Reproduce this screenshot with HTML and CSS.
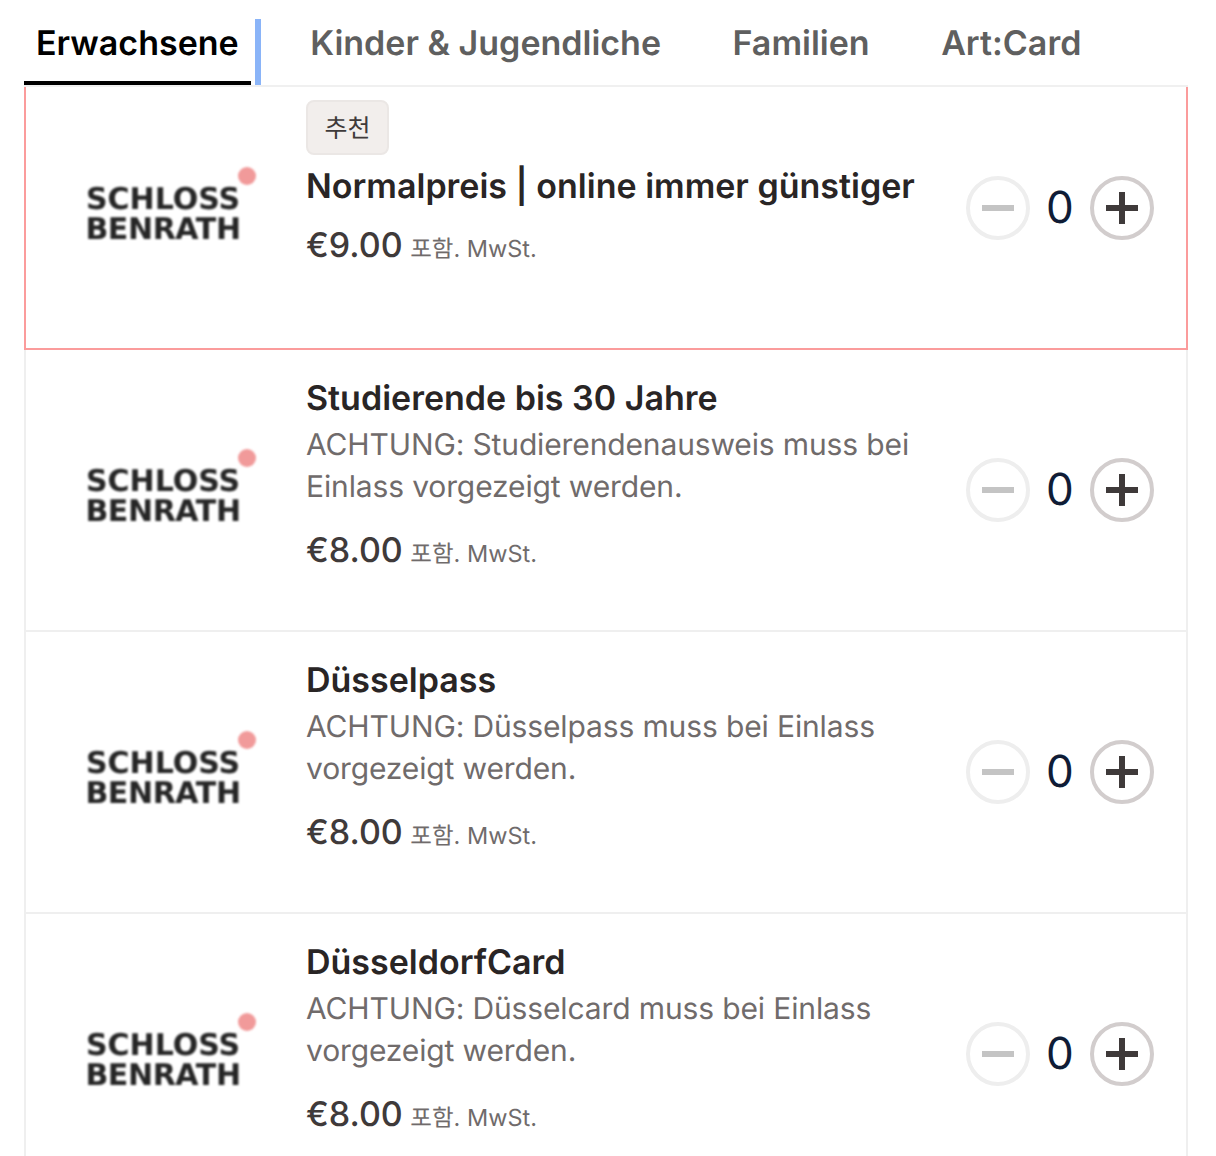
FILE: index.html
```html
<!DOCTYPE html>
<html lang="de">
<head>
<meta charset="utf-8">
<title>Tickets</title>
<link rel="stylesheet" href="styles.css">
</head>
<body>
<main class="page">
  <nav class="tabs">
    <a class="tab tab-active">Erwachsene<span class="focus-bar"></span></a>
    <a class="tab">Kinder &amp; Jugendliche</a>
    <a class="tab">Familien</a>
    <a class="tab">Art:Card</a>
  </nav>
  <section class="list">
    <article class="row row-featured">
      <div class="logo-col"><div class="logo"><span class="logo-dot"></span><span>SCHLOSS</span><span class="logo-second">BENRATH</span></div></div>
      <div class="info info-top">
        <span class="badge">추천</span>
        <h3 class="title">Normalpreis | online immer günstiger</h3>
        <p class="price price-tight"><span class="amount">€9.00</span> <span class="tax">포함. MwSt.</span></p>
      </div>
      <div class="stepper">
        <button class="step step-off"><svg viewBox="0 0 32 32" width="32" height="32"><path d="M0 13h32v6H0z"/></svg></button>
        <span class="count">0</span>
        <button class="step step-on"><svg viewBox="0 0 32 32" width="32" height="32"><path d="M13 0h6v13h13v6H19v13h-6V19H0v-6h13z"/></svg></button>
      </div>
    </article>
    <article class="row">
      <div class="logo-col"><div class="logo"><span class="logo-dot"></span><span>SCHLOSS</span><span class="logo-second">BENRATH</span></div></div>
      <div class="info">
        <h3 class="title">Studierende bis 30 Jahre</h3>
        <p class="desc">ACHTUNG: Studierendenausweis muss bei Einlass vorgezeigt werden.</p>
        <p class="price"><span class="amount">€8.00</span> <span class="tax">포함. MwSt.</span></p>
      </div>
      <div class="stepper">
        <button class="step step-off"><svg viewBox="0 0 32 32" width="32" height="32"><path d="M0 13h32v6H0z"/></svg></button>
        <span class="count">0</span>
        <button class="step step-on"><svg viewBox="0 0 32 32" width="32" height="32"><path d="M13 0h6v13h13v6H19v13h-6V19H0v-6h13z"/></svg></button>
      </div>
    </article>
    <article class="row">
      <div class="logo-col"><div class="logo"><span class="logo-dot"></span><span>SCHLOSS</span><span class="logo-second">BENRATH</span></div></div>
      <div class="info">
        <h3 class="title">Düsselpass</h3>
        <p class="desc">ACHTUNG: Düsselpass muss bei Einlass vorgezeigt werden.</p>
        <p class="price"><span class="amount">€8.00</span> <span class="tax">포함. MwSt.</span></p>
      </div>
      <div class="stepper">
        <button class="step step-off"><svg viewBox="0 0 32 32" width="32" height="32"><path d="M0 13h32v6H0z"/></svg></button>
        <span class="count">0</span>
        <button class="step step-on"><svg viewBox="0 0 32 32" width="32" height="32"><path d="M13 0h6v13h13v6H19v13h-6V19H0v-6h13z"/></svg></button>
      </div>
    </article>
    <article class="row">
      <div class="logo-col"><div class="logo"><span class="logo-dot"></span><span>SCHLOSS</span><span class="logo-second">BENRATH</span></div></div>
      <div class="info">
        <h3 class="title">DüsseldorfCard</h3>
        <p class="desc">ACHTUNG: Düsselcard muss bei Einlass vorgezeigt werden.</p>
        <p class="price"><span class="amount">€8.00</span> <span class="tax">포함. MwSt.</span></p>
      </div>
      <div class="stepper">
        <button class="step step-off"><svg viewBox="0 0 32 32" width="32" height="32"><path d="M0 13h32v6H0z"/></svg></button>
        <span class="count">0</span>
        <button class="step step-on"><svg viewBox="0 0 32 32" width="32" height="32"><path d="M13 0h6v13h13v6H19v13h-6V19H0v-6h13z"/></svg></button>
      </div>
    </article>
  </section>
</main>
</body>
</html>
```
FILE: styles.css
```css
* { box-sizing: border-box; }
html, body { margin: 0; height: 1156px; overflow: hidden; background: #fff; }
body { font-family: Inter, "Noto Sans CJK KR", sans-serif; text-rendering: geometricPrecision; }
.page { padding: 19px 28px 0 24px; }
.tabs { display: flex; gap: 47.5px; height: 68px; border-bottom: 2px solid #f0f0f0; }
.tab { position: relative; height: 66px; padding: 0 12px; font-size: 34px; line-height: 50px; font-weight: 600; color: #5f5f5f; white-space: nowrap; }
.tab-active { color: #000; border-bottom: 4px solid #000; }
.focus-bar { position: absolute; top: 0; right: -10px; width: 6px; height: 66px; background: #8ab4f8; }
.list { display: flex; flex-direction: column; }
.row { display: flex; align-items: center; height: 282px; padding-right: 32px; border: 2px solid #efefef; border-top: 0; }
.row-featured { height: 263px; padding-top: 13px; padding-bottom: 32px; border: 2px solid #fb9c9c; border-top: 0; }
.logo-col { flex: none; width: 280px; display: flex; justify-content: center; padding-right: 6px; }
.logo { position: relative; display: flex; flex-direction: column; align-items: center; margin-top: 14px; font-family: "DejaVu Sans", sans-serif; font-size: 30px; line-height: 30px; font-weight: 700; color: #262626; filter: blur(0.8px); }
.logo-second { letter-spacing: -0.4px; }
.logo-dot { position: absolute; top: -18px; right: -15px; width: 18px; height: 18px; border-radius: 50%; background: #f19a9a; }
.info { flex: 1; min-width: 0; display: flex; flex-direction: column; align-items: flex-start; padding-right: 40px; padding-bottom: 24px; }
.info-top { align-self: flex-start; padding-bottom: 0; }
.badge { height: 55px; padding: 0 16.5px 2px; display: flex; align-items: center; font-size: 25px; color: #3f3a3a; background: #f2eeec; border: 2px solid #ebe7e5; border-radius: 8px; margin-bottom: 9px; }
.title { margin: 0 0 2px; font-size: 34px; line-height: 46px; font-weight: 600; color: #292525; }
.desc { margin: 0; font-size: 30px; line-height: 42px; letter-spacing: -0.13px; color: #706b6b; }
.price { margin: 18px 0 0; line-height: 50px; color: #706b6b; }
.price-tight { margin-top: 9px; }
.amount { font-size: 34px; font-weight: 500; color: #3f3a3a; }
.tax { font-size: 23.5px; margin-left: 3px; }
.stepper { flex: none; display: flex; align-items: center; gap: 16px; }
.step { flex: none; width: 64px; height: 64px; padding: 0; background: #fff; border: 4px solid; border-radius: 50%; display: flex; align-items: center; justify-content: center; }
.step-off { border-color: #eeeeee; fill: #c4c4c4; }
.step-on { border-color: #d2cdcd; fill: #3f3a3a; }
.count { width: 28px; padding: 0 2px 2px 0; text-align: center; font-size: 44px; color: #0f1c36; }
```
